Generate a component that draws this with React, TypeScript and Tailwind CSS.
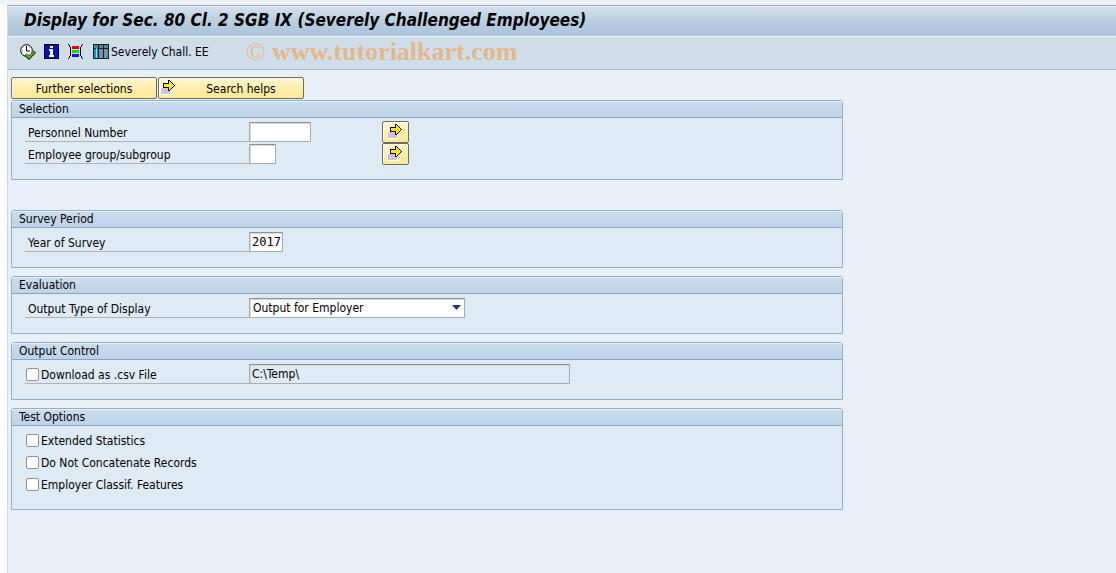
import clsx from 'clsx';
import React, { useId, useState } from 'react';

const inputStyle =
    'h-5 rounded-[1px] border border-[#a8abae] border-t-[#8d9093] text-[12px] text-black shadow-[inset_1px_1px_1px_#d4d6d9] outline-none';

export default function App() {
    return (
        <div className="min-h-screen bg-linear-to-b from-white to-[#fdfdfe] font-['DejaVu_Sans_Condensed','DejaVu_Sans',sans-serif] text-[12px] leading-4 text-black">
            <div className="h-[5px] bg-[#eef2f9]" />
            <div className="ml-[7px] min-h-[calc(100vh-5px)] border-t border-l border-t-[#9fa5b6] border-l-[#cfd6e4] bg-[#e8f0f7]">
                <header className="flex h-[31px] items-center border-y border-[#edf3f9] bg-linear-to-b from-[#d2e0ee] via-[#b9cede] to-[#abc3dd] pb-1 pl-4">
                    <h1 className="text-[17px] leading-5 font-bold whitespace-nowrap italic">
                        Display for Sec. 80 Cl. 2 SGB IX (Severely Challenged
                        Employees)
                    </h1>
                </header>
                <Toolbar />
                <SelectionScreen />
            </div>
        </div>
    );
}

function Toolbar() {
    return (
        <div className="flex h-[33px] items-center border-b border-[#a3b7c8] bg-[#cfdde8] pb-0.5 pl-3 whitespace-nowrap">
            <button type="button" aria-label="Execute" className="mr-2">
                <ExecuteIcon />
            </button>
            <button type="button" aria-label="Information" className="mr-2">
                <InfoIcon />
            </button>
            <button type="button" aria-label="Variants" className="mr-[9px]">
                <VariantIcon />
            </button>
            <button type="button" className="flex items-center gap-0.5">
                <TableIcon />
                Severely Chall. EE
            </button>
            <p className="ml-[37px] font-['Liberation_Serif',serif] text-[26px] leading-8 text-[#e3b88c]">
                © <span className="font-bold">www.tutorialkart.com</span>
            </p>
        </div>
    );
}

function SelectionScreen() {
    const [year, setYear] = useState('2017');
    const [personnel, setPersonnel] = useState('');
    const [group, setGroup] = useState('');

    return (
        <main className="max-w-[835px] pt-[7px] pl-[3px]">
            <div className="mb-px flex gap-px">
                <YellowButton className="w-[146px] pt-0.5">
                    Further selections
                </YellowButton>
                <YellowButton className="w-[146px] pt-0.5 pl-5">
                    <span className="absolute top-0.5 left-px">
                        <ArrowIcon />
                    </span>
                    Search helps
                </YellowButton>
            </div>

            <Group title="Selection" className="mb-[30px]">
                <Field label="Personnel Number" more>
                    {(id) => (
                        <input
                            id={id}
                            value={personnel}
                            onChange={(e) => setPersonnel(e.target.value)}
                            className={clsx(
                                inputStyle,
                                'w-[62px] bg-white px-0.5',
                            )}
                        />
                    )}
                </Field>
                <Field label="Employee group/subgroup" more>
                    {(id) => (
                        <input
                            id={id}
                            value={group}
                            onChange={(e) => setGroup(e.target.value)}
                            className={clsx(
                                inputStyle,
                                'w-[27px] bg-white px-0.5',
                            )}
                        />
                    )}
                </Field>
            </Group>

            <Group title="Survey Period" className="mb-2">
                <Field label="Year of Survey">
                    {(id) => (
                        <input
                            id={id}
                            value={year}
                            onChange={(e) => setYear(e.target.value)}
                            className={clsx(
                                inputStyle,
                                "w-[34px] bg-white pl-0.5 font-['DejaVu_Sans_Mono',monospace]",
                            )}
                        />
                    )}
                </Field>
            </Group>

            <Group title="Evaluation" className="mb-2">
                <Field label="Output Type of Display">
                    {(id) => (
                        <div className="relative">
                            <select
                                id={id}
                                className={clsx(
                                    inputStyle,
                                    'block w-[216px] appearance-none bg-white px-[3px]',
                                )}
                            >
                                <option>Output for Employer</option>
                            </select>
                            <svg
                                viewBox="0 0 9 5"
                                className="pointer-events-none absolute top-[7px] right-1 h-[5px] w-[9px]"
                            >
                                <path d="M0 0h9L4.5 5z" fill="#1f3b6e" />
                            </svg>
                        </div>
                    )}
                </Field>
            </Group>

            <Group title="Output Control" className="mb-2">
                <div className="flex h-[22px] items-start">
                    <div className="h-[21px] w-[224px] border-b border-[#b0b4b8]">
                        <Check label="Download as .csv File" />
                    </div>
                    <div className="flex pt-px">
                        <input
                            aria-label="File path"
                            readOnly
                            value="C:\Temp\"
                            className={clsx(
                                inputStyle,
                                'w-[321px] bg-[#deeaf4] px-0.5',
                            )}
                        />
                    </div>
                </div>
            </Group>

            <Group title="Test Options">
                <Check label="Extended Statistics" />
                <Check label="Do Not Concatenate Records" />
                <Check label="Employer Classif. Features" />
            </Group>
        </main>
    );
}

type GroupProps = {
    title: string;
    className?: string;
    children: React.ReactNode;
};

function Group({ title, className, children }: GroupProps) {
    return (
        <section
            className={clsx(
                'rounded-t-[3px] border border-[#8fb0cd] bg-[#deeaf4]',
                className,
            )}
        >
            <h2 className="h-[17px] rounded-t-[2px] border-b border-[#88a5c8] bg-linear-to-b from-[#cbdcee] to-[#bdd3e8] pl-[7px] shadow-[inset_0_1px_0_#e6f0f9]">
                {title}
            </h2>
            <div className="pt-[3px] pb-3.5 pl-[13px]">{children}</div>
        </section>
    );
}

type FieldProps = {
    label: string;
    more?: boolean;
    children: (id: string) => React.ReactNode;
};

function Field({ label, more, children }: FieldProps) {
    const id = useId();

    return (
        <div className="flex h-[22px] items-start">
            <label
                htmlFor={id}
                className="h-[21px] w-[224px] border-b border-[#b0b4b8] pt-1 pl-[3px]"
            >
                {label}
            </label>
            <div className="flex w-[133px] pt-px">{children(id)}</div>
            {more && (
                <YellowButton
                    className="w-[27px]"
                    label={`Multiple selection: ${label}`}
                >
                    <ArrowIcon />
                </YellowButton>
            )}
        </div>
    );
}

function Check({ label }: { label: string }) {
    const id = useId();

    return (
        <div className="flex h-[22px] items-center pl-px">
            <input
                id={id}
                type="checkbox"
                className="mr-0.5 size-[13px] appearance-none rounded-[2px] border border-[#8f9397] bg-white checked:bg-[#1f3b6e]"
            />
            <label htmlFor={id} className="pt-0.5">
                {label}
            </label>
        </div>
    );
}

type YellowButtonProps = {
    className?: string;
    label?: string;
    children: React.ReactNode;
};

function YellowButton({ className, label, children }: YellowButtonProps) {
    return (
        <button
            type="button"
            aria-label={label}
            className={clsx(
                'relative flex h-[22px] items-center justify-center rounded-[2px] border border-[#6f6c66] bg-linear-to-b from-[#fff6cf] via-[#fdeeac] to-[#fde995] shadow-[inset_1px_1px_0_#fffbe6]',
                className,
            )}
        >
            {children}
        </button>
    );
}

function ArrowIcon() {
    return (
        <svg
            viewBox="0 0 17 16"
            className="h-4 w-[17px]"
            shapeRendering="crispEdges"
        >
            <path d="M0 7h11v8H0z" fill="#fff" />
            <path d="M1 8h9v6H1z" fill="#d2bfe0" />
            <path d="M3 3h5V0h2v1h1v1h1v1h1v1h1v1h1v1h-1v1h-1v1h-1v1h-1v1h-1v1H8V8H3z" />
            <path
                d="M4 4h5V1h1v1h1v1h1v1h1v1h1v1h-1v1h-1v1h-1v1h-1v1H9V7H4z"
                fill="#ffea00"
            />
        </svg>
    );
}

function ExecuteIcon() {
    return (
        <svg viewBox="0 0 16 16" className="size-4">
            <circle cx="6.5" cy="6.5" r="5.8" fill="#fff" stroke="#000" />
            <path d="M6.5 2v5H10" fill="none" stroke="#000" />
            <path
                d="M2 6.5h1M6.5 10v1M3.5 3.5l.5.5M9.5 3.5l-.5.5"
                stroke="#666"
            />
            <path
                d="M5.5 10.5l3.5 3.5 6-6.5"
                fill="none"
                stroke="#16380a"
                strokeWidth="3"
            />
            <path
                d="M6 10.5l3 3 5.5-6"
                fill="none"
                stroke="#67b82e"
                strokeWidth="1.6"
            />
        </svg>
    );
}

function InfoIcon() {
    return (
        <svg
            viewBox="0 0 16 16"
            className="size-4"
            shapeRendering="crispEdges"
        >
            <path d="M0 0h15v15H0z" />
            <path d="M1 1h13v13H1z" fill="#0010c8" />
            <path d="M6 2h3v2H6zM5 5h4v6h1v2H5v-2h1V7H5z" fill="#fff" />
        </svg>
    );
}

function VariantIcon() {
    return (
        <svg
            viewBox="0 0 16 16"
            className="size-4"
            shapeRendering="crispEdges"
        >
            <path d="M0 0h1v1H0zM1 1h1v2H1zM2 3h1v9H2zM1 12h1v2H1zM0 14h1v1H0z" />
            <path d="M14 0h1v1h-1zM13 1h1v2h-1zM12 3h1v9h-1zM13 12h1v2h-1zM14 14h1v1h-1z" />
            <path d="M4 2h7v3H4z" fill="#f00000" />
            <path d="M4 6h7v3H4z" fill="#00e400" />
            <path d="M4 10h7v3H4z" fill="#1010f0" />
        </svg>
    );
}

function TableIcon() {
    return (
        <svg
            viewBox="0 0 16 16"
            className="size-4"
            shapeRendering="crispEdges"
        >
            <path d="M0 0h16v15H0z" fill="#102028" />
            <path d="M1 1h4v3H1zM6 1h4v3H6zM11 1h4v3h-4z" fill="#5f8294" />
            <path d="M1 5h4v9H1z" fill="#1c93cf" />
            <path d="M3 4h1v10H3z" fill="#7fe0ff" />
            <path d="M6 5h4v9H6zM11 5h4v9h-4z" fill="#7692a2" />
        </svg>
    );
}
